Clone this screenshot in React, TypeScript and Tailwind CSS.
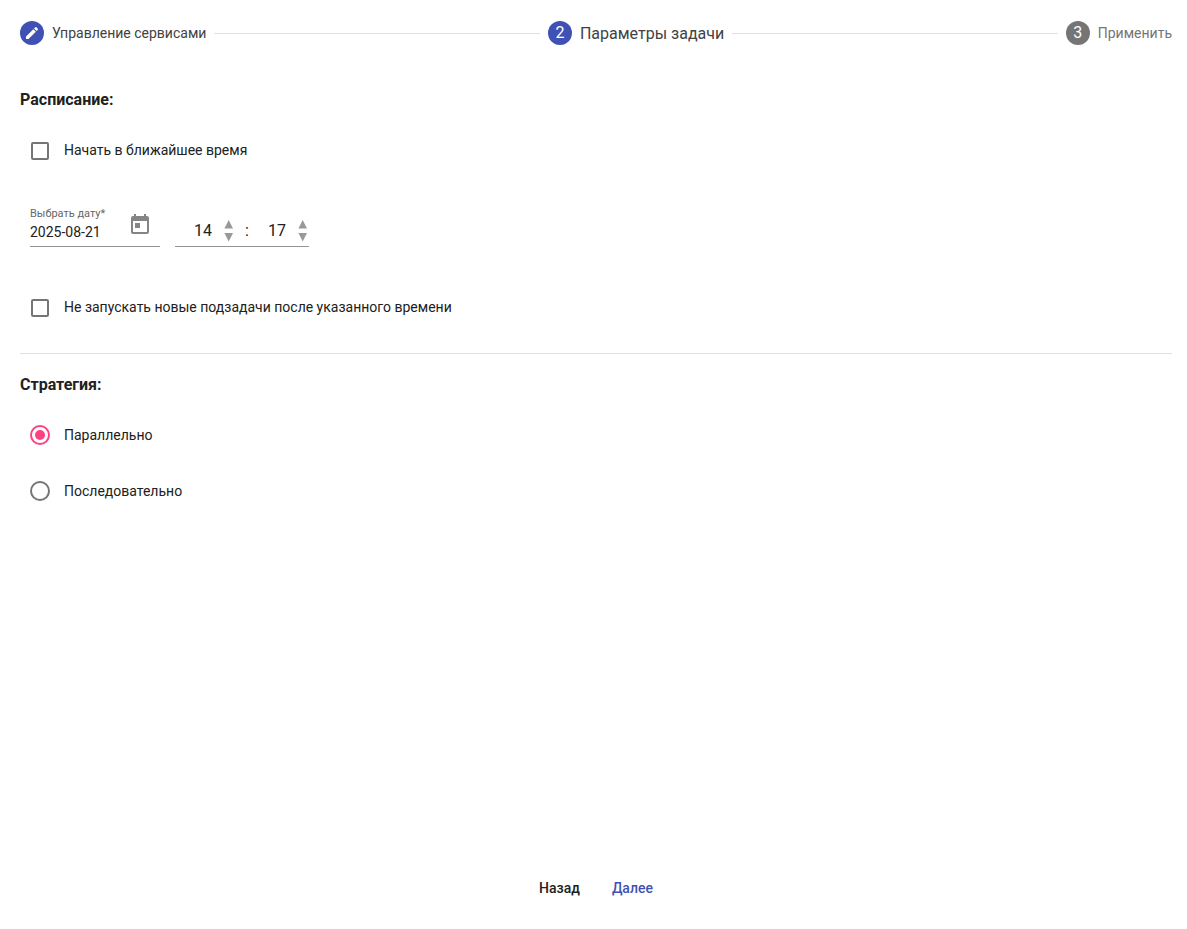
import { useState } from 'react';
import type { ReactNode } from 'react';

function StepBadge({ active, children }: { active: boolean; children: ReactNode }) {
  return (
    <span
      className={`flex size-6 shrink-0 items-center justify-center rounded-full text-base leading-normal text-white ${
        active ? 'bg-[#3f51b5]' : 'bg-[#757575]'
      }`}
    >
      {children}
    </span>
  );
}

function StepLine() {
  return <li aria-hidden="true" className="h-px min-w-8 flex-1 bg-[#e0e0e0]" />;
}

function Stepper() {
  return (
    <ol className="flex h-6 items-center gap-2 whitespace-nowrap">
      <li className="flex items-center gap-2 text-sm text-[#424242]">
        <StepBadge active>
          <svg viewBox="0 0 24 24" className="size-4 fill-current" aria-hidden="true">
            <path d="M3 17.25V21h3.75L17.81 9.94l-3.75-3.75L3 17.25zM20.71 7.04c.39-.39.39-1.02 0-1.41l-2.34-2.34c-.39-.39-1.02-.39-1.41 0l-1.83 1.83 3.75 3.75 1.83-1.83z" />
          </svg>
        </StepBadge>
        Управление сервисами
      </li>
      <StepLine />
      <li className="flex items-center gap-2 text-base leading-[19px] text-[#424242]" aria-current="step">
        <StepBadge active>2</StepBadge>
        Параметры задачи
      </li>
      <StepLine />
      <li className="flex items-center gap-2 text-sm text-[#757575]">
        <StepBadge active={false}>3</StepBadge>
        Применить
      </li>
    </ol>
  );
}

function CheckRow({ id, children }: { id: string; children: ReactNode }) {
  return (
    <div className="flex h-6 items-center gap-[15px] pl-[11px]">
      <input
        id={id}
        type="checkbox"
        className="size-[18px] appearance-none rounded-[2px] border-2 border-[#757575] checked:border-[#ff4081] checked:bg-[#ff4081]"
      />
      <label htmlFor={id} className="pb-0.5 text-sm">
        {children}
      </label>
    </div>
  );
}

function RadioRow({
  id,
  checked,
  onSelect,
  children,
}: {
  id: string;
  checked: boolean;
  onSelect: () => void;
  children: ReactNode;
}) {
  return (
    <div className="flex h-6 items-center gap-[14px] pl-[10px]">
      <span className="grid size-5 place-items-center">
        <input
          id={id}
          type="radio"
          name="strategy"
          checked={checked}
          onChange={onSelect}
          className="peer col-start-1 row-start-1 size-5 appearance-none rounded-full border-2 border-[#757575] checked:border-[#ff4081]"
        />
        <span className="pointer-events-none col-start-1 row-start-1 hidden size-[10px] rounded-full bg-[#ff4081] peer-checked:block" />
      </span>
      <label htmlFor={id} className="text-sm">
        {children}
      </label>
    </div>
  );
}

function TimeUnit({ label, initial, limit }: { label: string; initial: number; limit: number }) {
  const [value, setValue] = useState(initial);
  const shift = (step: number) => setValue((value + step + limit) % limit);
  return (
    <div className="flex items-center gap-3">
      <input
        aria-label={label}
        value={String(value).padStart(2, '0')}
        onChange={(event) => setValue(Number(event.target.value.replace(/\D/g, '')) % limit)}
        className="h-6 w-[37px] bg-transparent text-right text-base outline-none"
      />
      <div className="flex flex-col gap-1 text-[#999]">
        <button type="button" aria-label={`${label}: больше`} onClick={() => shift(1)}>
          <svg viewBox="0 0 10 9" className="h-[9px] w-[10px] fill-current" aria-hidden="true">
            <path d="M4.7 0L9 8.6H.4z" />
          </svg>
        </button>
        <button type="button" aria-label={`${label}: меньше`} onClick={() => shift(-1)}>
          <svg viewBox="0 0 10 9" className="h-[9px] w-[10px] fill-current" aria-hidden="true">
            <path d="M.4 0H9L4.7 8.6z" />
          </svg>
        </button>
      </div>
    </div>
  );
}

export default function App() {
  const [strategy, setStrategy] = useState('parallel');
  const [date, setDate] = useState('2025-08-21');
  return (
    <form
      onSubmit={(event) => event.preventDefault()}
      className="flex min-h-screen flex-col bg-white pt-[21px] pr-[15px] pb-[23px] pl-5 font-['Roboto',sans-serif] text-[#212121]"
    >
      <Stepper />

      <section className="border-b border-[#e0e0e0] pt-[43px] pb-[33px]">
        <h2 className="text-base font-bold">Расписание:</h2>
        <div className="pt-[27px]">
          <CheckRow id="start-soon">Начать в ближайшее время</CheckRow>
        </div>
        <div className="flex items-end gap-[15px] pt-11 pb-[49px] pl-[10px]">
          <div className="flex h-10 w-[130px] items-start justify-between border-b border-[#949494]">
            <div className="flex flex-col pt-px">
              <label htmlFor="date" className="text-[11px] leading-3 whitespace-nowrap text-[#666]">
                Выбрать дату*
              </label>
              <input
                id="date"
                value={date}
                onChange={(event) => setDate(event.target.value)}
                className="mt-0.5 h-5 w-[90px] bg-transparent text-sm outline-none"
              />
            </div>
            <button type="button" aria-label="Открыть календарь" className="mt-1.5 mr-2 text-[#858585]">
              <svg viewBox="0 0 24 24" className="size-6 fill-current" aria-hidden="true">
                <path d="M19 3h-1V1h-2v2H8V1H6v2H5c-1.11 0-1.99.9-1.99 2L3 19c0 1.1.89 2 2 2h14c1.1 0 2-.9 2-2V5c0-1.1-.9-2-2-2zm0 16H5V8h14v11zM7 10h5v5H7z" />
              </svg>
            </button>
          </div>
          <div className="flex w-[134px] items-center border-b border-[#949494] pb-[3px]">
            <TimeUnit label="Часы" initial={14} limit={24} />
            <span className="w-[15px] pl-[11px] text-base">:</span>
            <TimeUnit label="Минуты" initial={17} limit={60} />
          </div>
        </div>
        <CheckRow id="stop-after">Не запускать новые подзадачи после указанного времени</CheckRow>
      </section>

      <section className="pt-[19px]">
        <h2 className="text-base font-bold">Стратегия:</h2>
        <div className="flex flex-col gap-8 pt-[26px]">
          <RadioRow id="parallel" checked={strategy === 'parallel'} onSelect={() => setStrategy('parallel')}>
            Параллельно
          </RadioRow>
          <RadioRow id="sequential" checked={strategy === 'sequential'} onSelect={() => setStrategy('sequential')}>
            Последовательно
          </RadioRow>
        </div>
      </section>

      <footer className="mt-auto flex justify-center">
        <button type="button" className="h-9 px-4 text-sm font-medium">
          Назад
        </button>
        <button type="submit" className="h-9 px-4 text-sm font-medium text-[#3f51b5]">
          Далее
        </button>
      </footer>
    </form>
  );
}
